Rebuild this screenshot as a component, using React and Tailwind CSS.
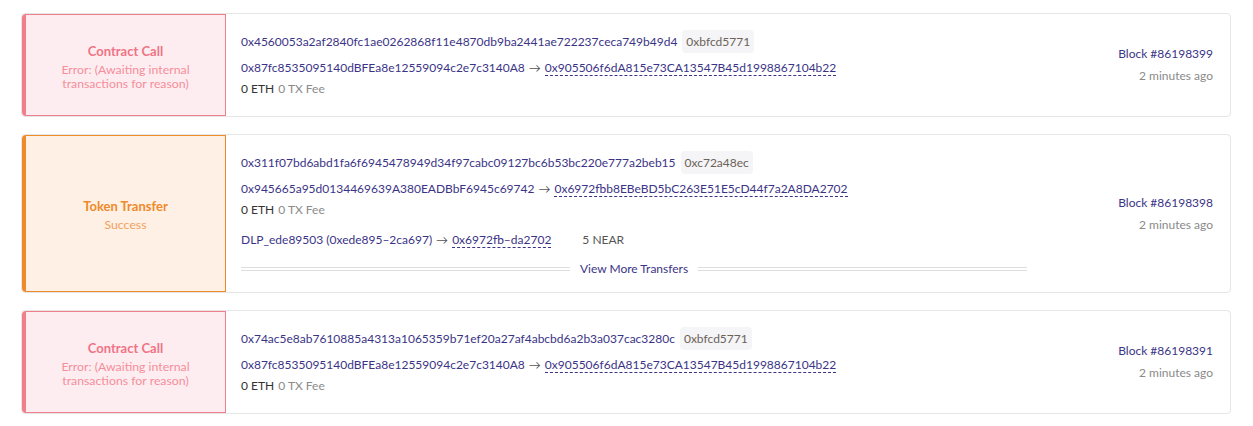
const txs = [
  {
    kind: "error",
    title: "Contract Call",
    status: "Error: (Awaiting internal transactions for reason)",
    hash: "0x4560053a2af2840fc1ae0262868f11e4870db9ba2441ae722237ceca749b49d4",
    method: "0xbfcd5771",
    from: "0x87fc8535095140dBFEa8e12559094c2e7c3140A8",
    to: "0x905506f6dA815e73CA13547B45d1998867104b22",
    block: "86198399",
  },
  {
    kind: "token",
    title: "Token Transfer",
    status: "Success",
    hash: "0x311f07bd6abd1fa6f6945478949d34f97cabc09127bc6b53bc220e777a2beb15",
    method: "0xc72a48ec",
    from: "0x945665a95d0134469639A380EADBbF6945c69742",
    to: "0x6972fbb8EBeBD5bC263E51E5cD44f7a2A8DA2702",
    block: "86198398",
    transfer: { from: "DLP_ede89503 (0xede895–2ca697)", to: "0x6972fb–da2702", amount: "5 NEAR" },
  },
  {
    kind: "error",
    title: "Contract Call",
    status: "Error: (Awaiting internal transactions for reason)",
    hash: "0x74ac5e8ab7610885a4313a1065359b71ef20a27af4abcbd6a2b3a037cac3280c",
    method: "0xbfcd5771",
    from: "0x87fc8535095140dBFEa8e12559094c2e7c3140A8",
    to: "0x905506f6dA815e73CA13547B45d1998867104b22",
    block: "86198391",
  },
];

function Tile({ tx }) {
  const err = tx.kind === "error";
  return (
    <div
      className={`w-[204px] shrink-0 flex flex-col items-center justify-center text-center rounded-l-[4px] border border-l-4 px-6 pt-[3px] ${
        err ? "bg-[#feedf0] border-[#f07f8c]" : "bg-[#fef0e4] border-[#ef8a2b]"
      }`}
    >
      <div className={`text-[13px] font-bold leading-[16px] ${err ? "text-[#ef7485]" : "text-[#ef8a2b]"}`}>{tx.title}</div>
      <div className={`text-[12.3px] leading-[14px] mt-[4px] ${err ? "text-[#f58d9b]" : "text-[#f2a05c]"}`}>{tx.status}</div>
    </div>
  );
}

function Row({ tx }) {
  return (
    <div className="flex border border-[#e6e6e6] rounded-[4px] bg-white">
      <Tile tx={tx} />
      <div className="flex-1 flex flex-col justify-center pl-[15px] pt-[16px] pb-[17px] min-w-0">
        <div className="flex items-center h-[23px]">
          <span className="text-[#3b3486]">{tx.hash}</span>
          <span className="ml-[5px] bg-[#f5f5f7] rounded-[4px] px-[4px] h-[23px] flex items-center text-[#6b6258]">{tx.method}</span>
        </div>
        <div className="flex items-center h-[20px] mt-[5px] text-[#3b3486]">
          <span>{tx.from}</span>
          <span className="text-[#555] mx-[4px]">→</span>
          <span className="border-b border-dashed border-[#3b3486] leading-[14px]">{tx.to}</span>
        </div>
        <div className="h-[20px] mt-[1px] flex items-center">
          <span className="text-[#333]">0 ETH</span>
          <span className="text-[#8a8a8a] ml-[4px]">0 TX Fee</span>
        </div>
        {tx.transfer && (
          <>
            <div className="flex items-center h-[20px] mt-[10px] text-[#3b3486]">
              <span>{tx.transfer.from}</span>
              <span className="text-[#555] mx-[4px]">→</span>
              <span className="border-b border-dashed border-[#3b3486] leading-[14px]">{tx.transfer.to}</span>
              <span className="ml-[31px] text-[#555]">{tx.transfer.amount}</span>
            </div>
            <div className="flex items-center h-[20px] mt-[9px] -mb-[4px]">
              <div className="flex-1 h-[4px] border-t border-b border-[#dedede]" />
              <span className="px-[10px] text-[#3b3486]">View More Transfers</span>
              <div className="flex-1 h-[4px] border-t border-b border-[#dedede]" />
            </div>
          </>
        )}
      </div>
      <div className="w-[203px] shrink-0 flex flex-col items-end justify-center pr-[17px] gap-[6px]">
        <div className="text-[#3b3486] leading-[16px]">Block #{tx.block}</div>
        <div className="text-[#8a8a8a] leading-[16px]">2 minutes ago</div>
      </div>
    </div>
  );
}

export default function App() {
  return (
    <div className="w-[1253px] h-[426px] bg-white pl-[21px] pr-[22px] pt-[13px] flex flex-col gap-[17px] text-[12px] font-['Lato','Liberation_Sans',sans-serif]">
      {txs.map((tx, i) => (
        <Row key={i} tx={tx} />
      ))}
    </div>
  );
}
